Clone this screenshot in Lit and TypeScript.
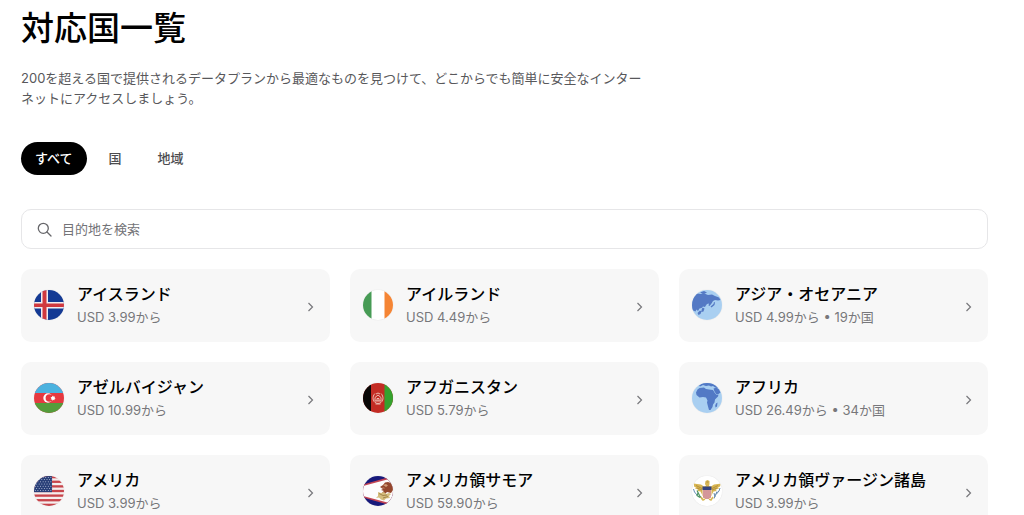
import { LitElement, html, svg, css } from "lit";
import { customElement, property, state } from "lit/decorators.js";

const stripes = (count: number, color: string) =>
  Array.from({ length: count }, (_, i) =>
    i % 2 === 0
      ? svg`<rect y=${(i * 30) / count} width="30" height=${30 / count} fill=${color} />`
      : null
  );

const starGrid = () => {
  const stars = [];
  for (let row = 0; row < 7; row++) {
    for (let col = 0; col < 7; col++) {
      stars.push(
        svg`<circle cx=${1.3 + col * 2.6 + (row % 2) * 1.3} cy=${1.4 + row * 2.2} r=".5" fill="#c3cbe2" />`
      );
    }
  }
  return stars;
};

const art: Record<string, unknown> = {
  iceland: svg`
    <rect width="30" height="30" fill="#143a94" />
    <path d="M7 0h7v30h-7zM0 12h30v6.500H0z" fill="#f0eef2" />
    <path d="M8.500 0h4v30h-4zM0 13.400h30v3.700H0z" fill="#d0393f" />`,
  ireland: svg`
    <rect width="30" height="30" fill="#fff" />
    <rect width="8.500" height="30" fill="#479b55" />
    <rect x="21.500" width="8.500" height="30" fill="#f58535" />`,
  asia: svg`
    <rect width="30" height="30" fill="#a9cff1" />
    <path d="M0 7 5 3.500 9 4l2-1 5 2 4-.5 3 1.500 4 1.500 1.500 2.500-2.500.5-3-.5-2 1-1.500 2.500-2 2.500-1-.5.5-2-2 .5-1.500 2L13 17l-2-.5-1.500 1.500-2 .5L6 21l-1.500-1.500-1 2L0 20z" fill="#5479c4" />
    <path d="M8 2.500 12 1l3 1.500L12 4zM10.500 17.500l2 1-1 3-2 .5v-2zM5.500 23l2.500-2.500 1.500 1-1 2.500-2 1z" fill="#5479c4" />
    <path d="m18.500 16.500 3-2.500.5-2 1 .5-.5 2.500-3 2.500z" fill="#5479c4" />`,
  azerbaijan: svg`
    <rect width="30" height="30" fill="#e53940" />
    <rect width="30" height="10" fill="#4bb2df" />
    <rect y="20" width="30" height="10" fill="#549c3b" />
    <circle cx="14" cy="15" r="4.700" fill="#fff" />
    <circle cx="15.400" cy="15" r="3.800" fill="#e53940" />
    <path d="m19 12.500.6 1.200 1.400-.3-.4 1.200 1 .6-1.200.7.3 1.400-1.200-.6-.9 1-.5-1.300-1.400.1.700-1.200-.9-.9 1.300-.3z" fill="#fff" />`,
  afghanistan: svg`
    <rect width="30" height="30" fill="#c32c24" />
    <rect width="8" height="30" fill="#090706" />
    <rect x="21.500" width="8.500" height="30" fill="#35a22e" />
    <g fill="none" stroke="#f0c9c0" stroke-width=".9">
      <path d="M12 10.500c-3 3-2.500 8 1 9.500 1 .5 3 .5 4 0 3.500-1.500 4-6.500 1-9.500" />
      <path d="M12 18v-3.500l3-2.500 3 2.500V18zM14 18v-2.500h2V18M13 11l2-1 2 1M12.500 21h5" />
    </g>`,
  africa: svg`
    <rect width="30" height="30" fill="#a9cff1" />
    <path d="M7 2.500 11 0h9l5 3 1 2-3-.5-2-1.500-2 .5-2-1-3 .5-3-1-3 1.500z" fill="#5279c5" />
    <path d="M7.500 5 12 4.500l2 1.500 3 .5 4 .5 1.500 2.500 2 2.500 2-.5-.5 2-3 3-.5 3-1.500 2-.5 2.500-2 3h-1.500L16 23.500l-1-4 .5-2-1.500-3-3-.5-3.500.5L4.500 12l-.5-2.500 1.500-3z" fill="#5279c5" />
    <path d="m21.500 5.500 3-1 2.500 2 1.500 3-2 1.500-2 .5-2-3z" fill="#5279c5" />
    <path d="m24 20.500 1.500-1-.5 4-1.500 1-.3-2z" fill="#5279c5" />`,
  usa: svg`
    <rect width="30" height="30" fill="#f5eeee" />
    ${stripes(13, "#c7444b")}
    <rect width="18" height="16.150" fill="#293f78" />
    ${starGrid()}`,
  samoa: svg`
    <rect width="30" height="30" fill="#17197b" />
    <path d="M0 8.500 30 0v30L0 21.500z" fill="#c34453" />
    <path d="M0 10 30 2v26L0 20z" fill="#fdfcfd" />
    <path d="m17 11 3-2 2-2.500 3-.5 3 1 2 3v4l-2 3-4-1-2 2-3-1.500 2-1.500-3-1 2-1z" fill="#94472d" />
    <path d="m20 9 3-1 2 1.500-2 1.500zM18 12l3-.5 1 1z" fill="#cf9a75" />
    <path d="m15 16 3 1 3-1 2 2 3-1 2 1-2 2 1 2-4 .5-2 2-3-1-2-2-3 .5 2-2z" fill="#d5bd7d" />
    <path d="m16 17.500 4 2 4-.5M20 22l5-1.500" fill="none" stroke="#8c6b35" stroke-width=".7" />`,
  virgin: svg`
    <rect width="30" height="30" fill="#fff" />
    <path d="M2 7.500 5 8l4 .5 3 2 2-.5-1-2 .5-3 2-1 2 1v3l-.5 2 2 .5 3-2 4-.5 3-.5-1 3-2 1 1 1-3 1 .5 1.500-3 .5-2 4-3 3h-3l-3-3-2-4-3-.5.5-1.500-3-1 1-1-2-1z" fill="#d8b653" />
    <path d="m4 9.500 6 3M5 12l5 2M26 9.500l-6 3M25 12l-5 2M14.500 6h2" stroke="#a17f36" stroke-width=".7" />
    <path d="M10.500 13h9v5.500l-1.500 3-3 2-3-2-1.500-3z" fill="#efe5e3" />
    <path d="M12 13v9M14 13v10M16 13v10M18 13v9" stroke="#b94850" />
    <path d="M10.500 10.500h9V14h-9z" fill="#34437e" />
    <path d="m1.500 13 1 3 2.500 3" fill="none" stroke="#648eb4" />
    <path d="m5 14.500 2.500 5 3 4M6 17l-1 2.500 3 2" fill="none" stroke="#4d9262" stroke-width="1.200" />
    <path d="m28 12-1 3-3 3.500M25 15.500l-3 7M22 17l1 4" fill="none" stroke="#6488ac" />
    <path d="m9 21 2 3 2-1M21 21l-2 3-2-1" fill="none" stroke="#d8b653" stroke-width="1.500" />`,
};

interface Destination {
  name: string;
  price: string;
  flag: string;
  countries?: number;
}

const destinations: Destination[] = [
  { name: "アイスランド", price: "3.99", flag: "iceland" },
  { name: "アイルランド", price: "4.49", flag: "ireland" },
  { name: "アジア・オセアニア", price: "4.99", flag: "asia", countries: 19 },
  { name: "アゼルバイジャン", price: "10.99", flag: "azerbaijan" },
  { name: "アフガニスタン", price: "5.79", flag: "afghanistan" },
  { name: "アフリカ", price: "26.49", flag: "africa", countries: 34 },
  { name: "アメリカ", price: "3.99", flag: "usa" },
  { name: "アメリカ領サモア", price: "59.90", flag: "samoa" },
  { name: "アメリカ領ヴァージン諸島", price: "3.99", flag: "virgin" },
];

@customElement("destination-card")
export class DestinationCard extends LitElement {
  @property({ attribute: false }) item!: Destination;

  static styles = css`
    :host {
      display: block;
      min-width: 0;
    }
    .card {
      display: flex;
      align-items: center;
      gap: 13px;
      padding: 12px 16px 15px 13px;
      border-radius: 10px;
      background: #f7f7f7;
      color: #000;
      text-decoration: none;
    }
    .flag {
      flex: none;
      width: 30px;
      height: 30px;
      margin-top: 2px;
      border-radius: 50%;
      overflow: hidden;
      box-shadow: 0 0 1px #00000030;
    }
    .body {
      flex: 1;
      min-width: 0;
    }
    .name {
      display: block;
      font-size: 16px;
      font-weight: 500;
      line-height: 26px;
    }
    .price {
      display: block;
      font-size: 13px;
      line-height: 20px;
      color: #77777b;
    }
    .chevron {
      flex: none;
      width: 7px;
      height: 10px;
      margin-top: 6px;
    }
  `;

  render() {
    const { name, price, flag, countries } = this.item;
    return html`
      <a class="card" href="#${flag}">
        <svg class="flag" viewBox="0 0 30 30" aria-hidden="true">${art[flag]}</svg>
        <span class="body">
          <span class="name">${name}</span>
          <span class="price">USD ${price}から${countries ? ` • ${countries}か国` : ""}</span>
        </span>
        <svg class="chevron" viewBox="0 0 7 10" fill="none" stroke="#77777b" stroke-width="1.200" aria-hidden="true">
          <path d="m1.500 1 4 4-4 4" />
        </svg>
      </a>
    `;
  }
}

@customElement("app-root")
export class AppRoot extends LitElement {
  @state() private tab = "すべて";
  @state() private query = "";

  static styles = css`
    :host {
      display: block;
      font-family: Inter, "Noto Sans CJK JP", sans-serif;
      background: #fff;
      color: #000;
    }
    .page {
      padding: 8px 36px 20px 21px;
    }
    .title {
      margin: 0;
      font-size: 33px;
      line-height: 40px;
      font-weight: 500;
    }
    .intro {
      margin: 20px 0 0;
      max-width: 632px;
      font-size: 13px;
      line-height: 20px;
      color: #58585b;
    }
    .tabs {
      display: flex;
      gap: 8px;
      margin-top: 34px;
    }
    .tab {
      padding: 0 14px;
      border: 0;
      border-radius: 17px;
      background: none;
      color: #4c4c4f;
      font-family: inherit;
      font-size: 13px;
      font-weight: 500;
      line-height: 33px;
      cursor: pointer;
    }
    .tab.active {
      background: #000;
      color: #fff;
    }
    .search {
      display: flex;
      align-items: center;
      gap: 10px;
      height: 40px;
      box-sizing: border-box;
      margin: 34px 0 20px;
      padding: 0 15px;
      border: 1px solid #e6e6e8;
      border-radius: 10px;
    }
    .glass {
      flex: none;
      width: 15px;
      height: 15px;
    }
    .field {
      flex: 1;
      min-width: 0;
      padding: 0;
      border: 0;
      outline: 0;
      background: none;
      color: inherit;
      font-family: inherit;
      font-size: 13px;
      line-height: 20px;
    }
    .field::placeholder {
      color: #737377;
      opacity: 1;
    }
    .grid {
      display: grid;
      grid-template-columns: repeat(3, minmax(0, 1fr));
      gap: 20px;
    }
    @media (max-width: 760px) {
      .grid {
        grid-template-columns: minmax(0, 1fr);
      }
    }
  `;

  private get visible() {
    return destinations.filter(
      (d) =>
        d.name.includes(this.query) &&
        (this.tab === "すべて" || (this.tab === "地域") === Boolean(d.countries))
    );
  }

  render() {
    return html`
      <main class="page" lang="ja">
        <h1 class="title">対応国一覧</h1>
        <p class="intro">
          200を超える国で提供されるデータプランから最適なものを見つけて、どこからでも簡単に安全なインターネットにアクセスしましょう。
        </p>
        <div class="tabs">
          ${["すべて", "国", "地域"].map(
            (t) => html`<button
              class="tab ${t === this.tab ? "active" : ""}"
              aria-pressed=${t === this.tab}
              @click=${() => (this.tab = t)}
            >${t}</button>`
          )}
        </div>
        <label class="search">
          <svg class="glass" viewBox="0 0 15 15" fill="none" stroke="#66666a" stroke-width="1.300" stroke-linecap="round" aria-hidden="true">
            <circle cx="6.300" cy="6.300" r="5" />
            <path d="m10 10 4 4" />
          </svg>
          <input
            class="field"
            type="text"
            placeholder="目的地を検索"
            aria-label="目的地を検索"
            @input=${(e: Event) => (this.query = (e.target as HTMLInputElement).value)}
          />
        </label>
        <div class="grid">
          ${this.visible.map((d) => html`<destination-card .item=${d}></destination-card>`)}
        </div>
      </main>
    `;
  }
}
